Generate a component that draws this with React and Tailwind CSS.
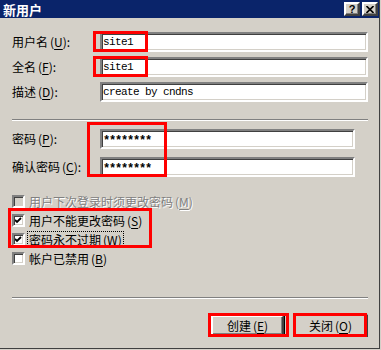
import React from 'react'

const sunken =
  'border-2 border-t-[#808080] border-l-[#808080] border-b-white border-r-white shadow-[inset_1px_1px_0_#404040,inset_-1px_-1px_0_#d4d0c8]'
const raised =
  'border-2 border-t-white border-l-white border-b-[#404040] border-r-[#404040] shadow-[inset_-1px_-1px_0_#808080]'

function Key({ k }) {
  return (
    <span className="ml-[2px]">
      (<span className="underline underline-offset-2">{k}</span>)
    </span>
  )
}

function Field({ label, k, value, width, pwd }) {
  return (
    <div className="flex h-[20px] items-center">
      <div className="w-[88px] whitespace-nowrap leading-none">
        {label}
        <Key k={k} />:
      </div>
      <div
        className={`${sunken} h-[20px] bg-white flex items-center pl-[1px] ${width || 'flex-1'}`}
      >
        <span
          className={
            pwd
              ? "font-['Liberation_Mono',monospace] text-[12px] font-bold tracking-[-1.2px] leading-none pt-[4px]"
              : "font-['Liberation_Mono',monospace] text-[11px] tracking-[-0.6px] leading-none"
          }
        >
          {value}
        </span>
      </div>
    </div>
  )
}

function Check({ checked, disabled, focus, children }) {
  return (
    <div className="flex h-[19px] items-center">
      <div
        className={`${sunken} w-[13px] h-[13px] flex items-center justify-center ${
          disabled ? 'bg-[#d4d0c8]' : 'bg-white'
        }`}
      >
        {checked && (
          <svg width="7" height="7" viewBox="0 0 7 7">
            <path d="M0 3 L2 5 L6 1" stroke="#000" strokeWidth="1.8" fill="none" />
          </svg>
        )}
      </div>
      <div
        className={`ml-[3px] px-[1px] leading-[15px] whitespace-nowrap ${
          focus ? 'outline outline-1 outline-dotted outline-black' : ''
        } ${disabled ? 'text-[#808080] [text-shadow:1px_1px_0_#fff]' : ''}`}
      >
        {children}
      </div>
    </div>
  )
}

function Sep() {
  return <div className="h-[2px] border-t border-t-[#808080] border-b border-b-white" />
}

function Btn({ children, def }) {
  return (
    <div
      className={`w-[75px] h-[23px] bg-[#d4d0c8] flex items-center justify-center ${
        def ? 'border border-black' : ''
      }`}
    >
      <div className={`${raised} w-full h-full flex items-center justify-center leading-none`}>
        {children}
      </div>
    </div>
  )
}

function RedBox({ className }) {
  return <div className={`absolute border-[3px] border-[#ff0000] pointer-events-none ${className}`} />
}

export default function App() {
  return (
    <div className="relative w-[381px] h-[350px] bg-[#d4d0c8] overflow-hidden font-['Noto_Sans_CJK_SC','Noto_Sans',sans-serif] text-[12px] text-black">
      <div className="w-[380px] h-[349px] border-r border-b border-[#404040] flex flex-col">
        <div className="h-[18px] bg-[#0a246a] flex items-center justify-between pl-[3px] pr-[1px]">
          <span className="text-white font-bold text-[13px] leading-none">新用户</span>
          <div className="flex gap-[2px]">
            <div className={`${raised} w-[16px] h-[14px] bg-[#d4d0c8] flex items-center justify-center font-['Liberation_Sans',sans-serif] font-bold text-[11px] leading-none`}>
              ?
            </div>
            <div className={`${raised} w-[16px] h-[14px] bg-[#d4d0c8] flex items-center justify-center`}>
              <svg width="8" height="7" viewBox="0 0 8 7">
                <path d="M0.5 0 L7.5 7 M7.5 0 L0.5 7" stroke="#000" strokeWidth="1.6" />
              </svg>
            </div>
          </div>
        </div>

        <div className="pl-[12px] pr-[11px] flex flex-col">
          <div className="mt-[14px] flex flex-col gap-[5px]">
            <Field label="用户名" k="U" value="site1" />
            <Field label="全名" k="F" value="site1" />
            <Field label="描述" k="D" value="create by cndns" />
          </div>
          <div className="mt-[17px]">
            <Sep />
          </div>
          <div className="mt-[8px] flex flex-col gap-[8px]">
            <Field label="密码" k="P" value="********" width="w-[255px]" pwd />
            <Field label="确认密码" k="C" value="********" width="w-[255px]" pwd />
          </div>
          <div className="mt-[15px] flex flex-col">
            <Check disabled>
              用户下次登录时须更改密码<Key k="M" />
            </Check>
            <Check checked>
              用户不能更改密码<Key k="S" />
            </Check>
            <Check checked focus>
              密码永不过期<Key k="W" />
            </Check>
            <Check>
              帐户已禁用<Key k="B" />
            </Check>
          </div>
          <div className="mt-[29px]">
            <Sep />
          </div>
          <div className="mt-[15px] flex justify-end gap-[8px]">
            <Btn def>
              创建<Key k="E" />
            </Btn>
            <Btn>
              关闭<Key k="O" />
            </Btn>
          </div>
        </div>
      </div>

      <RedBox className="left-[93px] top-[31px] w-[55px] h-[21px]" />
      <RedBox className="left-[93px] top-[56px] w-[55px] h-[21px]" />
      <RedBox className="left-[87px] top-[122px] w-[80px] h-[55px]" />
      <RedBox className="left-[8px] top-[208px] w-[144px] h-[40px]" />
      <RedBox className="left-[208px] top-[313px] w-[81px] h-[24px]" />
      <RedBox className="left-[293px] top-[313px] w-[74px] h-[24px]" />
    </div>
  )
}
